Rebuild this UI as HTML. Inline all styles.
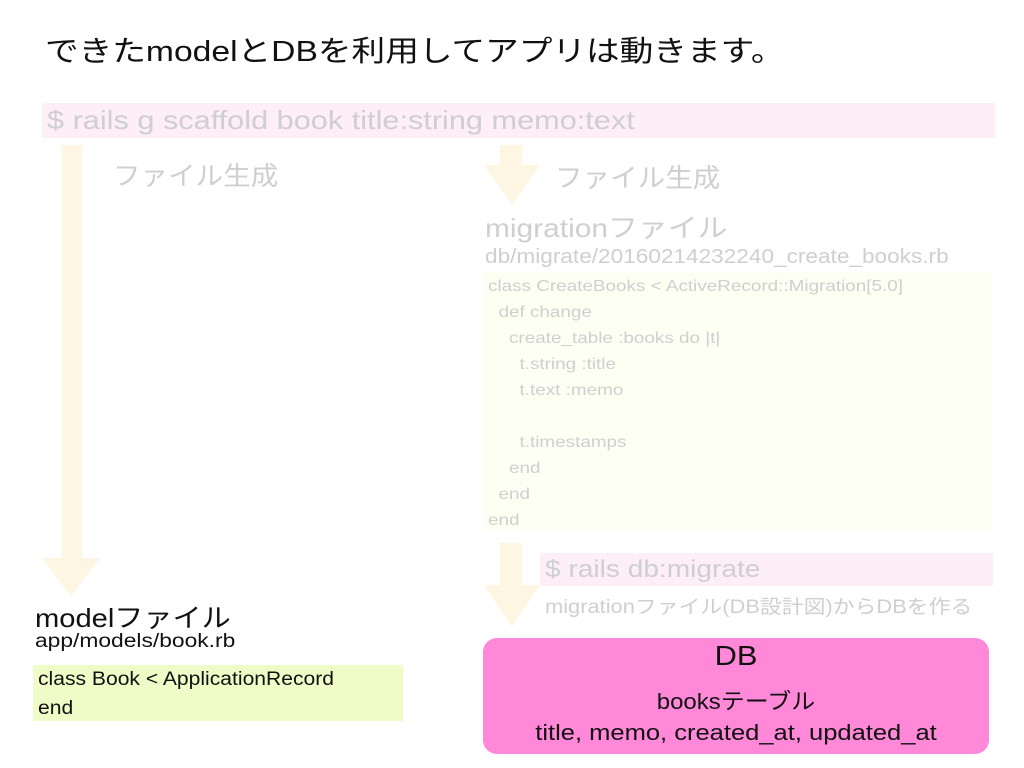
<!DOCTYPE html>
<html><head><meta charset="utf-8"><style>
body{margin:0;width:1024px;height:768px;background:#fff;position:relative;overflow:hidden;font-family:"Liberation Sans","Noto Sans CJK JP",sans-serif;}
div{position:absolute;white-space:nowrap;transform-origin:left top;}
.g{color:#cfcfcf}
</style></head><body>
<div style="left:45px;top:28px;font-size:29px;color:#111;transform:scaleX(1.16)">できたmodelとDBを利用してアプリは動きます。</div>
<div style="left:42px;top:103px;width:953px;height:35px;background:#fdeef8"></div>
<div class="g" style="left:47px;top:105px;font-size:26px;transform:scaleX(1.18)">$ rails g scaffold book title:string memo:text</div>
<div style="left:62px;top:145px;width:20px;height:414px;background:#fff5e3"></div>
<svg style="position:absolute;left:42px;top:558px" width="58" height="38"><polygon points="0,0 58,0 29,38" fill="#fff5e3"/></svg>
<div class="g" style="left:113px;top:156px;font-size:26px;transform:scaleX(1.06)">ファイル生成</div>
<div style="left:500px;top:145px;width:22px;height:21px;background:#fff5e3"></div>
<svg style="position:absolute;left:484px;top:165px" width="56" height="40"><polygon points="0,0 56,0 28,40" fill="#fff5e3"/></svg>
<div class="g" style="left:555px;top:158px;font-size:26px;transform:scaleX(1.06)">ファイル生成</div>
<div class="g" style="left:485px;top:208px;font-size:26px;transform:scaleX(1.15)">migrationファイル</div>
<div class="g" style="left:485px;top:246px;font-size:20px;transform:scaleX(1.13)">db/migrate/20160214232240_create_books.rb</div>
<div style="left:484px;top:272px;width:509px;height:259px;background:#fdfff3"></div>
<div class="g" style="left:488px;top:274px;font-size:16px;line-height:26px;white-space:pre;transform:scaleX(1.18)">class CreateBooks &lt; ActiveRecord::Migration[5.0]
  def change
    create_table :books do |t|
      t.string :title
      t.text :memo

      t.timestamps
    end
  end
end</div>
<div style="left:500px;top:543px;width:22px;height:43px;background:#fff5e3"></div>
<svg style="position:absolute;left:484px;top:585px" width="56" height="42"><polygon points="0,0 56,0 28,42" fill="#fff5e3"/></svg>
<div style="left:540px;top:553px;width:453px;height:33px;background:#fdeef8"></div>
<div class="g" style="left:545px;top:556px;font-size:24px;transform:scaleX(1.17)">$ rails db:migrate</div>
<div class="g" style="left:545px;top:592px;font-size:19px;transform:scaleX(1.15)">migrationファイル(DB設計図)からDBを作る</div>
<div style="left:483px;top:638px;width:506px;height:116px;background:#ff88d8;border-radius:14px"></div>
<div style="left:483px;top:640px;width:506px;text-align:center;font-size:28px;color:#111;transform-origin:center top;transform:scaleX(1.1)">DB</div>
<div style="left:483px;top:684px;width:506px;text-align:center;font-size:22px;color:#111;transform-origin:center top;transform:scaleX(1.09)">booksテーブル</div>
<div style="left:483px;top:720px;width:506px;text-align:center;font-size:22px;color:#111;transform-origin:center top;transform:scaleX(1.16)">title, memo, created_at, updated_at</div>
<div style="left:35px;top:598px;font-size:26px;color:#111;transform:scaleX(1.12)">modelファイル</div>
<div style="left:35px;top:631px;font-size:19px;color:#111;transform:scaleX(1.2)">app/models/book.rb</div>
<div style="left:33px;top:665px;width:370px;height:56px;background:#effcc8"></div>
<div style="left:38px;top:665px;font-size:19px;line-height:29px;color:#111;white-space:pre;transform:scaleX(1.11)">class Book &lt; ApplicationRecord
end</div>
</body></html>
